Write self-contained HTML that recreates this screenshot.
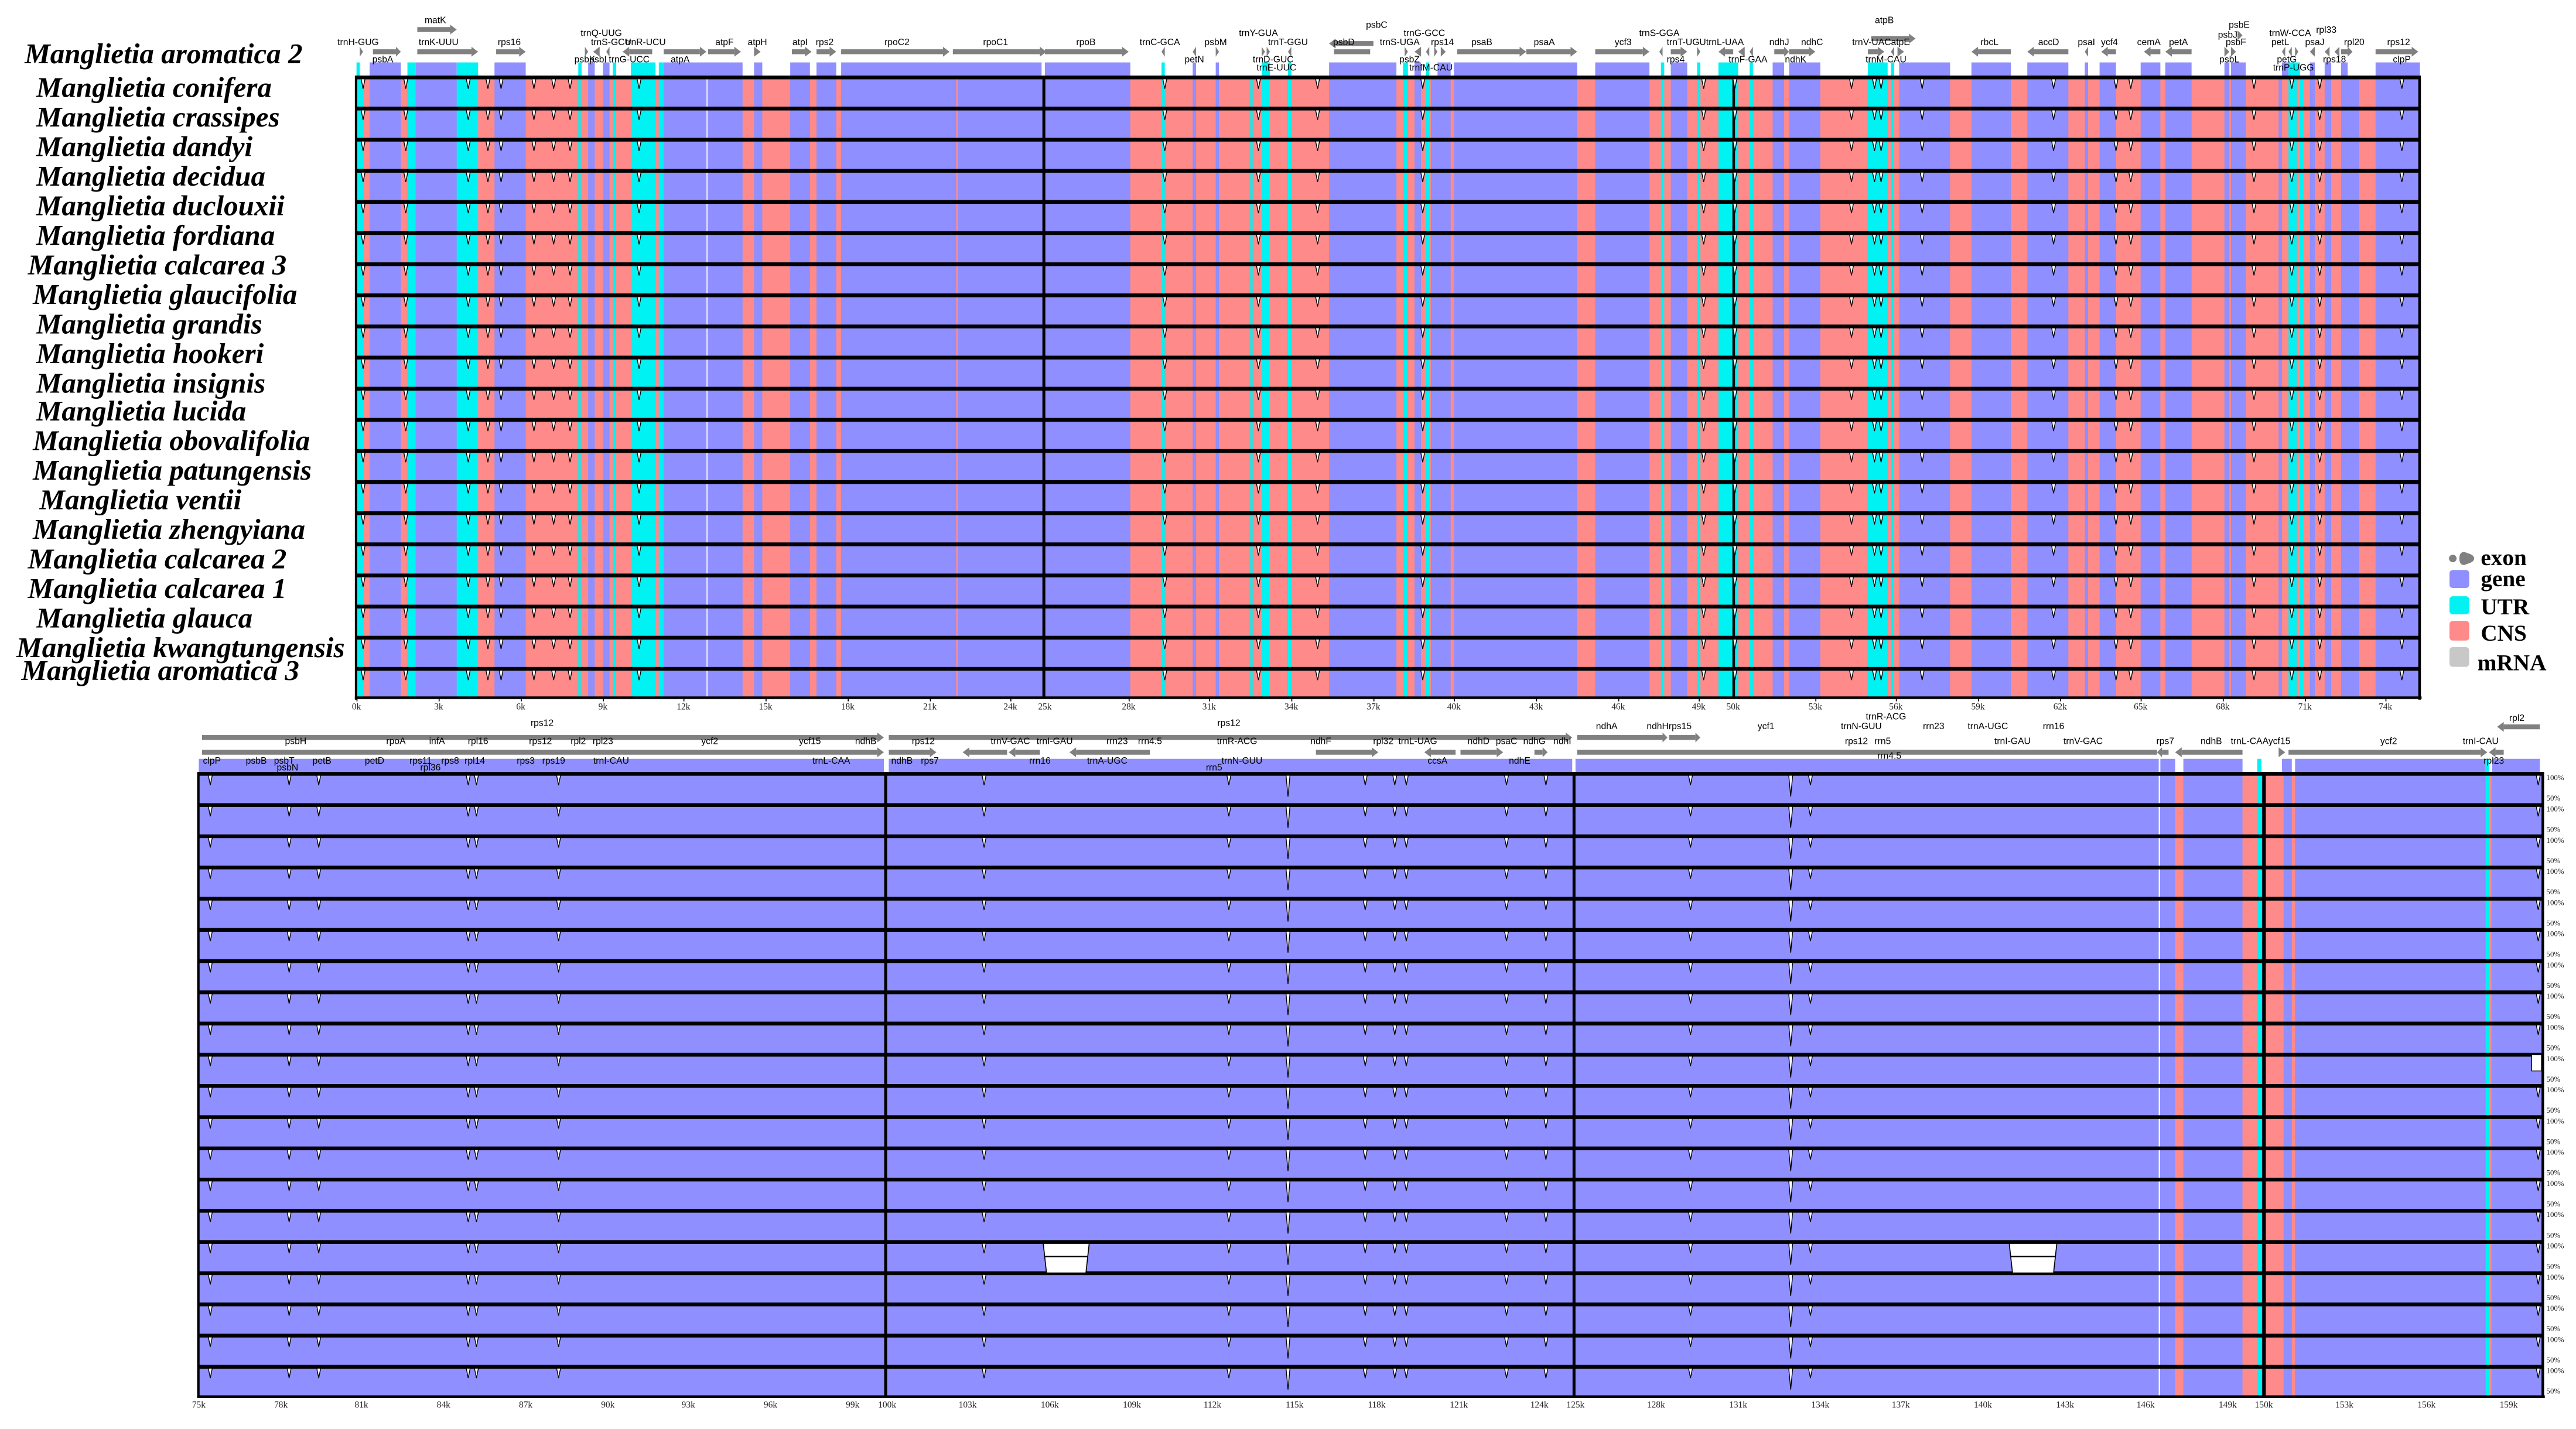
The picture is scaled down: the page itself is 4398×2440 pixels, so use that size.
<!DOCTYPE html>
<html><head><meta charset="utf-8"><style>
html,body{margin:0;padding:0;background:#fff;}
svg{display:block;}
.g{font-family:"Liberation Sans",sans-serif;font-size:5.6px;fill:#000;text-anchor:middle;}
.sp{font-family:"Liberation Serif",serif;font-style:italic;font-weight:bold;font-size:17.5px;fill:#000;}
.tk{font-family:"Liberation Serif",serif;font-size:5.5px;fill:#222;text-anchor:middle;}
.pc{font-family:"Liberation Serif",serif;font-size:4.6px;fill:#222;}
.lg{font-family:"Liberation Serif",serif;font-weight:bold;font-size:14px;fill:#000;}
</style></head><body>
<svg width="4398" height="2440" viewBox="0 0 1568 870" preserveAspectRatio="none" xmlns="http://www.w3.org/2000/svg">
<defs>
<path id="spk" d="M-1.2,0 L1.2,0 L0,6 Z" fill="#fff" stroke="#000" stroke-width="0.5"/>
<path id="spkd" d="M-1.2,0 L1.2,0 L0,13 Z" fill="#fff" stroke="#000" stroke-width="0.5"/>
<g id="trow">
<rect x="217" y="0" width="1256" height="2.3" fill="#000"/>
<use href="#spk" x="221" y="2"/><use href="#spk" x="247" y="2"/><use href="#spk" x="285" y="2"/><use href="#spk" x="297" y="2"/>
<use href="#spk" x="305" y="2"/><use href="#spk" x="325" y="2"/><use href="#spk" x="337" y="2"/><use href="#spk" x="347" y="2"/>
<use href="#spk" x="389" y="2"/><use href="#spk" x="709" y="2"/><use href="#spk" x="766" y="2"/><use href="#spk" x="802" y="2"/>
<use href="#spk" x="866" y="2"/><use href="#spk" x="1037" y="2"/><use href="#spk" x="1056" y="2"/><use href="#spk" x="1127" y="2"/>
<use href="#spk" x="1141" y="2"/><use href="#spk" x="1145" y="2"/><use href="#spk" x="1170" y="2"/><use href="#spk" x="1250" y="2"/>
<use href="#spk" x="1288" y="2"/><use href="#spk" x="1297" y="2"/><use href="#spk" x="1372" y="2"/><use href="#spk" x="1395" y="2"/>
<use href="#spk" x="1412" y="2"/><use href="#spk" x="1462" y="2"/>
</g>
<g id="brow">
<rect x="121" y="0" width="1427" height="2.3" fill="#000"/>
<use href="#spk" x="128" y="2"/><use href="#spk" x="176" y="2"/><use href="#spk" x="194" y="2"/><use href="#spk" x="285" y="2"/>
<use href="#spk" x="290" y="2"/><use href="#spk" x="340" y="2"/><use href="#spk" x="599" y="2"/><use href="#spk" x="748" y="2"/>
<use href="#spkd" x="784" y="2"/><use href="#spk" x="831" y="2"/><use href="#spk" x="849" y="2"/><use href="#spk" x="856" y="2"/>
<use href="#spk" x="917" y="2"/><use href="#spk" x="941" y="2"/><use href="#spk" x="1029" y="2"/><use href="#spkd" x="1090" y="2"/>
<use href="#spk" x="1102" y="2"/><use href="#spk" x="1545" y="2"/>
<text class="pc" x="1550" y="5">100%</text><text class="pc" x="1550" y="17.5">50%</text>
</g>
</defs>

<!-- ===== TOP PANEL ===== -->
<rect x="217" y="46" width="1256" height="379" fill="#8f8fff"/>
<g fill="#ff8a8a">
<rect x="221" y="46" width="4" height="379"/><rect x="244" y="46" width="4" height="379"/><rect x="291" y="46" width="10" height="379"/>
<rect x="320" y="46" width="38" height="379"/><rect x="362" y="46" width="5" height="379"/><rect x="371" y="46" width="13" height="379"/>
<rect x="399" y="46" width="2" height="379"/><rect x="452" y="46" width="7" height="379"/><rect x="464" y="46" width="17" height="379"/>
<rect x="493" y="46" width="4" height="379"/><rect x="509" y="46" width="3" height="379"/><rect x="582" y="46" width="1" height="379"/>
<rect x="688" y="46" width="121" height="379"/><rect x="850" y="46" width="21" height="379"/><rect x="883" y="46" width="2" height="379"/>
<rect x="960" y="46" width="11" height="379"/><rect x="1004" y="46" width="13" height="379"/><rect x="1027" y="46" width="52" height="379"/>
<rect x="1086" y="46" width="3" height="379"/><rect x="1108" y="46" width="48" height="379"/><rect x="1187" y="46" width="13" height="379"/>
<rect x="1224" y="46" width="10" height="379"/><rect x="1259" y="46" width="10" height="379"/><rect x="1271" y="46" width="7" height="379"/>
<rect x="1288" y="46" width="15" height="379"/><rect x="1315" y="46" width="3" height="379"/><rect x="1334" y="46" width="20" height="379"/>
<rect x="1357" y="46" width="1" height="379"/><rect x="1367" y="46" width="39" height="379"/><rect x="1409" y="46" width="6" height="379"/>
<rect x="1419" y="46" width="6" height="379"/><rect x="1436" y="46" width="10" height="379"/>
</g>
<g fill="#8f8fff">
<rect x="726" y="46" width="2" height="379"/><rect x="740" y="46" width="2" height="379"/><rect x="861" y="46" width="4" height="379"/>
<rect x="871" y="46" width="4" height="379"/><rect x="1387" y="46" width="2" height="379"/>
</g>
<g fill="#00f2f2">
<rect x="217" y="46" width="4" height="379"/><rect x="248" y="46" width="5" height="379"/><rect x="278" y="46" width="13" height="379"/>
<rect x="352" y="46" width="1.5" height="379"/><rect x="373" y="46" width="2" height="379"/><rect x="384" y="46" width="15" height="379"/>
<rect x="401" y="46" width="3" height="379"/><rect x="707" y="46" width="2" height="379"/><rect x="761" y="46" width="1.5" height="379"/>
<rect x="768" y="46" width="5" height="379"/><rect x="784" y="46" width="2" height="379"/><rect x="854" y="46" width="3" height="379"/>
<rect x="868" y="46" width="2" height="379"/><rect x="1011" y="46" width="2" height="379"/><rect x="1033" y="46" width="2" height="379"/>
<rect x="1046" y="46" width="12" height="379"/><rect x="1065" y="46" width="2" height="379"/><rect x="1137" y="46" width="12" height="379"/>
<rect x="1151" y="46" width="2" height="379"/><rect x="1393" y="46" width="5" height="379"/><rect x="1400" y="46" width="2" height="379"/>
</g>
<rect x="430" y="46" width="0.8" height="379" fill="#fff" opacity="0.8"/>
<rect x="634.5" y="46" width="1.8" height="379" fill="#000"/>
<rect x="1054.5" y="46" width="1.6" height="379" fill="#000"/>
<rect x="216" y="46" width="1.4" height="380" fill="#000"/>
<rect x="1472" y="46" width="1.6" height="380" fill="#000"/>
<rect x="216" y="424" width="1258" height="1.6" fill="#000"/>

<!-- gene band top -->
<g fill="#8f8fff">
<rect x="225" y="38" width="19" height="8"/><rect x="253" y="38" width="25" height="8"/><rect x="301" y="38" width="19" height="8"/>
<rect x="358" y="38" width="4" height="8"/><rect x="367" y="38" width="4" height="8"/><rect x="404" y="38" width="48" height="8"/>
<rect x="459" y="38" width="5" height="8"/><rect x="481" y="38" width="12" height="8"/><rect x="497" y="38" width="12" height="8"/>
<rect x="512" y="38" width="122" height="8"/><rect x="636" y="38" width="52" height="8"/><rect x="726" y="38" width="2" height="8"/>
<rect x="740" y="38" width="2" height="8"/><rect x="809" y="38" width="41" height="8"/><rect x="861" y="38" width="4" height="8"/>
<rect x="875" y="38" width="8" height="8"/><rect x="885" y="38" width="75" height="8"/><rect x="971" y="38" width="33" height="8"/>
<rect x="1017" y="38" width="10" height="8"/><rect x="1079" y="38" width="7" height="8"/><rect x="1089" y="38" width="19" height="8"/>
<rect x="1156" y="38" width="31" height="8"/><rect x="1200" y="38" width="24" height="8"/><rect x="1234" y="38" width="25" height="8"/>
<rect x="1269" y="38" width="2" height="8"/><rect x="1278" y="38" width="10" height="8"/><rect x="1303" y="38" width="12" height="8"/>
<rect x="1318" y="38" width="16" height="8"/><rect x="1354" y="38" width="3" height="8"/><rect x="1358" y="38" width="9" height="8"/>
<rect x="1389" y="38" width="4" height="8"/><rect x="1406" y="38" width="3" height="8"/><rect x="1415" y="38" width="4" height="8"/>
<rect x="1425" y="38" width="4" height="8"/><rect x="1446" y="38" width="27" height="8"/>
</g>
<g fill="#00f2f2">
<rect x="217" y="38" width="2" height="8"/><rect x="248" y="38" width="5" height="8"/><rect x="278" y="38" width="13" height="8"/>
<rect x="352" y="38" width="2" height="8"/><rect x="373" y="38" width="2" height="8"/><rect x="384" y="38" width="15" height="8"/>
<rect x="401" y="38" width="3" height="8"/><rect x="707" y="38" width="2" height="8"/><rect x="768" y="38" width="5" height="8"/>
<rect x="784" y="38" width="2" height="8"/><rect x="854" y="38" width="3" height="8"/><rect x="868" y="38" width="2" height="8"/>
<rect x="1011" y="38" width="2" height="8"/><rect x="1033" y="38" width="2" height="8"/><rect x="1046" y="38" width="12" height="8"/>
<rect x="1065" y="38" width="2" height="8"/><rect x="1137" y="38" width="12" height="8"/><rect x="1151" y="38" width="2" height="8"/>
<rect x="1393" y="38" width="7" height="8"/>
</g>

<!-- top rows -->
<use href="#trow" y="46"/><use href="#trow" y="64.95"/><use href="#trow" y="83.9"/><use href="#trow" y="102.85"/>
<use href="#trow" y="121.8"/><use href="#trow" y="140.75"/><use href="#trow" y="159.7"/><use href="#trow" y="178.65"/>
<use href="#trow" y="197.6"/><use href="#trow" y="216.55"/><use href="#trow" y="235.5"/><use href="#trow" y="254.45"/>
<use href="#trow" y="273.4"/><use href="#trow" y="292.35"/><use href="#trow" y="311.3"/><use href="#trow" y="330.25"/>
<use href="#trow" y="349.2"/><use href="#trow" y="368.15"/><use href="#trow" y="387.1"/><use href="#trow" y="406.05"/>

<!-- top arrows -->
<g fill="#808080">
<rect x="227" y="30" width="14" height="3"/><polygon points="241,28.5 244,31.5 241,34.5"/>
<rect x="254" y="30" width="33" height="3"/><polygon points="287,28.5 291,31.5 287,34.5"/>
<rect x="254" y="16.5" width="20" height="3"/><polygon points="274,15 278,18 274,21"/>
<rect x="302" y="30" width="14" height="3"/><polygon points="316,28.5 320,31.5 316,34.5"/>
<rect x="383" y="30" width="14" height="3"/><polygon points="383,28.5 379,31.5 383,34.5"/>
<rect x="404" y="30" width="22" height="3"/><polygon points="426,28.5 430,31.5 426,34.5"/>
<rect x="431" y="30" width="16" height="3"/><polygon points="447,28.5 451,31.5 447,34.5"/>
<polygon points="459,28.5 463,31.5 459,34.5"/>
<rect x="482" y="30" width="8" height="3"/><polygon points="490,28.5 494,31.5 490,34.5"/>
<rect x="497" y="30" width="8" height="3"/><polygon points="505,28.5 509,31.5 505,34.5"/>
<rect x="512" y="30" width="62" height="3"/><polygon points="574,28.5 578,31.5 574,34.5"/>
<rect x="580" y="30" width="53" height="3"/><polygon points="633,28.5 637,31.5 633,34.5"/>
<rect x="636" y="30" width="47" height="3"/><polygon points="683,28.5 687,31.5 683,34.5"/>
<rect x="813" y="25" width="23" height="3"/><polygon points="813,23.5 809,26.5 813,29.5"/>
<rect x="812" y="30" width="22" height="3"/>
<rect x="887" y="30" width="38" height="3"/><polygon points="925,28.5 929,31.5 925,34.5"/>
<rect x="929" y="30" width="27" height="3"/><polygon points="956,28.5 960,31.5 956,34.5"/>
<rect x="971" y="30" width="29" height="3"/><polygon points="1000,28.5 1004,31.5 1000,34.5"/>
<rect x="1017" y="30" width="6" height="3"/><polygon points="1023,28.5 1027,31.5 1023,34.5"/>
<rect x="1050" y="30" width="5" height="3"/><polygon points="1050,28.5 1046,31.5 1050,34.5"/>
<rect x="1080" y="30" width="6" height="3"/><polygon points="1086,28.5 1089,31.5 1086,34.5"/>
<rect x="1089" y="30" width="12" height="3"/><polygon points="1101,28.5 1105,31.5 1101,34.5"/>
<rect x="1137" y="30" width="6" height="3"/><polygon points="1143,28.5 1147,31.5 1143,34.5"/>
<rect x="1139" y="22" width="23" height="3"/><polygon points="1162,20.5 1166,23.5 1162,26.5"/>
<rect x="1204" y="30" width="20" height="3"/><polygon points="1204,28.5 1200,31.5 1204,34.5"/>
<rect x="1238" y="30" width="21" height="3"/><polygon points="1238,28.5 1234,31.5 1238,34.5"/>
<rect x="1283" y="30" width="5" height="3"/><polygon points="1283,28.5 1279,31.5 1283,34.5"/>
<rect x="1309" y="30" width="6" height="3"/><polygon points="1309,28.5 1305,31.5 1309,34.5"/>
<rect x="1322" y="30" width="12" height="3"/><polygon points="1322,28.5 1318,31.5 1322,34.5"/>
<rect x="1425" y="30" width="4" height="3"/>
<rect x="1446" y="30" width="22" height="3"/><polygon points="1468,28.5 1472,31.5 1468,34.5"/>
<polygon points="219,28.5 221,31.5 219,34.5"/><polygon points="356,28.5 358,31.5 356,34.5"/><polygon points="365,28.5 361,31.5 365,34.5"/>
<polygon points="371,28.5 369,31.5 371,34.5"/><polygon points="709,28.5 707,31.5 709,34.5"/><polygon points="728,28.5 726,31.5 728,34.5"/>
<polygon points="740,28.5 742,31.5 740,34.5"/><polygon points="768,28.5 770,31.5 768,34.5"/><polygon points="771,28.5 773,31.5 771,34.5"/>
<polygon points="786,28.5 784,31.5 786,34.5"/><polygon points="855,28.5 857,31.5 855,34.5"/><polygon points="865,28.5 861,31.5 865,34.5"/>
<polygon points="870,28.5 868,31.5 870,34.5"/><polygon points="873,28.5 875,31.5 873,34.5"/><polygon points="877,28.5 880,31.5 877,34.5"/>
<polygon points="1012,28.5 1010,31.5 1012,34.5"/><polygon points="1033,28.5 1035,31.5 1033,34.5"/><polygon points="1062,28.5 1058,31.5 1062,34.5"/>
<polygon points="1067,28.5 1065,31.5 1067,34.5"/><polygon points="1153,28.5 1151,31.5 1153,34.5"/><polygon points="1155,28.5 1159,31.5 1155,34.5"/>
<polygon points="1271,28.5 1269,31.5 1271,34.5"/><polygon points="1354,28.5 1357,31.5 1354,34.5"/><polygon points="1358,28.5 1361,31.5 1358,34.5"/>
<polygon points="1362,18.5 1365,21.5 1362,24.5"/><polygon points="1391,28.5 1389,31.5 1391,34.5"/><polygon points="1395,28.5 1393,31.5 1395,34.5"/>
<polygon points="1397,28.5 1399,31.5 1397,34.5"/><polygon points="1409,28.5 1406,31.5 1409,34.5"/><polygon points="1418,28.5 1415,31.5 1418,34.5"/>
<polygon points="1424,28.5 1421,31.5 1424,34.5"/><polygon points="1429,28.5 1432,31.5 1429,34.5"/>
</g>

<!-- top gene labels -->
<g class="g">
<text x="218" y="27.5">trnH-GUG</text><text x="267" y="27.5">trnK-UUU</text><text x="310" y="27.5">rps16</text>
<text x="372" y="27.5">trnS-GCU</text><text x="393" y="27.5">trnR-UCU</text><text x="441" y="27.5">atpF</text>
<text x="461" y="27.5">atpH</text><text x="487" y="27.5">atpI</text><text x="502" y="27.5">rps2</text>
<text x="546" y="27.5">rpoC2</text><text x="606" y="27.5">rpoC1</text><text x="661" y="27.5">rpoB</text>
<text x="706" y="27.5">trnC-GCA</text><text x="740" y="27.5">psbM</text><text x="784" y="27.5">trnT-GGU</text>
<text x="818" y="27.5">psbD</text><text x="852" y="27.5">trnS-UGA</text><text x="878" y="27.5">rps14</text>
<text x="902" y="27.5">psaB</text><text x="940" y="27.5">psaA</text><text x="988" y="27.5">ycf3</text>
<text x="1038" y="27.5">trnT-UGUtrnL-UAA</text><text x="1083" y="27.5">ndhJ</text><text x="1103" y="27.5">ndhC</text>
<text x="1145" y="27.5">trnV-UACatpE</text><text x="1211" y="27.5">rbcL</text><text x="1247" y="27.5">accD</text>
<text x="1270" y="27.5">psaI</text><text x="1284" y="27.5">ycf4</text><text x="1308" y="27.5">cemA</text>
<text x="1326" y="27.5">petA</text><text x="1361" y="27.5">psbF</text><text x="1388" y="27.5">petL</text>
<text x="1409" y="27.5">psaJ</text><text x="1433" y="27.5">rpl20</text><text x="1460" y="27.5">rps12</text>
<text x="265" y="14">matK</text><text x="366" y="22">trnQ-UUG</text><text x="838" y="17">psbC</text>
<text x="867" y="22">trnG-GCC</text><text x="766" y="22">trnY-GUA</text><text x="1010" y="22">trnS-GGA</text>
<text x="1147" y="14">atpB</text><text x="1363" y="17">psbE</text><text x="1356" y="23">psbJ</text>
<text x="1394" y="22">trnW-CCA</text><text x="1416" y="20">rpl33</text>
<text x="233" y="38">psbA</text><text x="356" y="38">psbK</text><text x="364" y="38">psbI</text>
<text x="383" y="38">trnG-UCC</text><text x="414" y="38">atpA</text><text x="727" y="38">petN</text>
<text x="775" y="38">trnD-GUC</text><text x="858" y="38">psbZ</text><text x="1020" y="38">rps4</text>
<text x="1064" y="38">trnF-GAA</text><text x="1093" y="38">ndhK</text><text x="1148" y="38">trnM-CAU</text>
<text x="1357" y="38">psbL</text><text x="1392" y="38">petG</text><text x="1421" y="38">rps18</text>
<text x="1462" y="38">clpP</text><text x="777" y="43">trnE-UUC</text><text x="871" y="43">trnfM-CAU</text>
<text x="1396" y="43">trnP-UGG</text>
</g>

<!-- species names -->
<g class="sp">
<text x="15" y="38.5">Manglietia aromatica 2</text>
<text x="22" y="59">Manglietia conifera</text>
<text x="22" y="77">Manglietia crassipes</text>
<text x="22" y="95">Manglietia dandyi</text>
<text x="22" y="113">Manglietia decidua</text>
<text x="22" y="131">Manglietia duclouxii</text>
<text x="22" y="149">Manglietia fordiana</text>
<text x="17" y="167">Manglietia calcarea 3</text>
<text x="20" y="185">Manglietia glaucifolia</text>
<text x="22" y="203">Manglietia grandis</text>
<text x="22" y="221">Manglietia hookeri</text>
<text x="22" y="239">Manglietia insignis</text>
<text x="22" y="256">Manglietia lucida</text>
<text x="20" y="274">Manglietia obovalifolia</text>
<text x="20" y="292">Manglietia patungensis</text>
<text x="24" y="310">Manglietia ventii</text>
<text x="20" y="328">Manglietia zhengyiana</text>
<text x="17" y="346">Manglietia calcarea 2</text>
<text x="17" y="364">Manglietia calcarea 1</text>
<text x="22" y="382">Manglietia glauca</text>
<text x="10" y="400">Manglietia kwangtungensis</text>
<text x="13" y="414">Manglietia aromatica 3</text>
</g>

<!-- top ticks -->
<g fill="#000">
<rect x="217" y="425" width="0.6" height="2"/><rect x="267" y="425" width="0.6" height="2"/><rect x="317" y="425" width="0.6" height="2"/>
<rect x="367" y="425" width="0.6" height="2"/><rect x="416" y="425" width="0.6" height="2"/><rect x="466" y="425" width="0.6" height="2"/>
<rect x="516" y="425" width="0.6" height="2"/><rect x="566" y="425" width="0.6" height="2"/><rect x="615" y="425" width="0.6" height="2"/>
<rect x="687" y="425" width="0.6" height="2"/><rect x="736" y="425" width="0.6" height="2"/><rect x="786" y="425" width="0.6" height="2"/>
<rect x="836" y="425" width="0.6" height="2"/><rect x="885" y="425" width="0.6" height="2"/><rect x="935" y="425" width="0.6" height="2"/>
<rect x="985" y="425" width="0.6" height="2"/><rect x="1034" y="425" width="0.6" height="2"/><rect x="1105" y="425" width="0.6" height="2"/>
<rect x="1154" y="425" width="0.6" height="2"/><rect x="1204" y="425" width="0.6" height="2"/><rect x="1254" y="425" width="0.6" height="2"/>
<rect x="1303" y="425" width="0.6" height="2"/><rect x="1353" y="425" width="0.6" height="2"/><rect x="1403" y="425" width="0.6" height="2"/>
<rect x="1452" y="425" width="0.6" height="2"/>
</g>
<g class="tk">
<text x="217" y="432">0k</text><text x="267" y="432">3k</text><text x="317" y="432">6k</text><text x="367" y="432">9k</text>
<text x="416" y="432">12k</text><text x="466" y="432">15k</text><text x="516" y="432">18k</text><text x="566" y="432">21k</text>
<text x="615" y="432">24k</text><text x="636" y="432">25k</text><text x="687" y="432">28k</text><text x="736" y="432">31k</text>
<text x="786" y="432">34k</text><text x="836" y="432">37k</text><text x="885" y="432">40k</text><text x="935" y="432">43k</text>
<text x="985" y="432">46k</text><text x="1034" y="432">49k</text><text x="1055" y="432">50k</text><text x="1105" y="432">53k</text>
<text x="1154" y="432">56k</text><text x="1204" y="432">59k</text><text x="1254" y="432">62k</text><text x="1303" y="432">65k</text>
<text x="1353" y="432">68k</text><text x="1403" y="432">71k</text><text x="1452" y="432">74k</text>
</g>

<!-- legend -->
<circle cx="1493" cy="340" r="2.3" fill="#808080"/>
<path d="M1497,340 Q1497,336 1500,336 L1504,337.5 Q1506,338.5 1506,340 Q1506,341.5 1504,342.5 L1500,344 Q1497,344 1497,340 Z" fill="#808080"/>
<rect x="1491" y="347" width="12" height="11" rx="2" fill="#8f8fff"/>
<rect x="1491" y="363" width="12" height="11" rx="2" fill="#00f2f2"/>
<rect x="1491" y="378" width="12" height="12" rx="2" fill="#ff8a8a"/>
<rect x="1491" y="394" width="12" height="12" rx="2" fill="#c8c8c8"/>
<text class="lg" x="1510" y="344">exon</text>
<text class="lg" x="1510" y="357">gene</text>
<text class="lg" x="1510" y="374">UTR</text>
<text class="lg" x="1510" y="390">CNS</text>
<text class="lg" x="1508" y="408">mRNA</text>

<!-- ===== BOTTOM PANEL ===== -->
<rect x="121" y="470" width="1427" height="380" fill="#8f8fff"/>
<g fill="#ff8a8a">
<rect x="1324" y="470" width="5" height="380"/><rect x="1365" y="470" width="9" height="380"/>
<rect x="1379" y="470" width="11" height="380"/><rect x="1395" y="470" width="2" height="380"/><rect x="1515" y="470" width="1.5" height="380"/>
</g>
<g fill="#00f2f2">
<rect x="1374" y="470" width="2.5" height="380"/><rect x="1513" y="470" width="2.2" height="380"/>
</g>
<rect x="1314" y="470" width="0.8" height="380" fill="#fff"/>
<rect x="120" y="470" width="1.5" height="381" fill="#000"/>
<rect x="538.2" y="470" width="1.8" height="381" fill="#000"/>
<rect x="957.2" y="470" width="1.8" height="381" fill="#000"/>
<rect x="1377" y="470" width="2.2" height="381" fill="#000"/>
<rect x="1547" y="470" width="1.6" height="381" fill="#000"/>
<rect x="120" y="849.5" width="1429" height="1.6" fill="#000"/>

<!-- bottom gene band -->
<g fill="#8f8fff">
<rect x="121" y="462" width="417" height="8"/><rect x="541" y="462" width="416" height="8"/>
<rect x="959" y="462" width="355" height="8"/><rect x="1315" y="462" width="9" height="8"/><rect x="1329" y="462" width="36" height="8"/>
<rect x="1389" y="462" width="6" height="8"/><rect x="1397" y="462" width="116" height="8"/><rect x="1517" y="462" width="29" height="8"/>
</g>
<g fill="#00f2f2"><rect x="1374" y="462" width="2.5" height="8"/><rect x="1513" y="462" width="2" height="8"/></g>

<!-- bottom rows -->
<use href="#brow" y="470"/><use href="#brow" y="489"/><use href="#brow" y="508"/><use href="#brow" y="527"/>
<use href="#brow" y="546"/><use href="#brow" y="565"/><use href="#brow" y="584"/><use href="#brow" y="603"/>
<use href="#brow" y="622"/><use href="#brow" y="641"/><use href="#brow" y="660"/><use href="#brow" y="679"/>
<use href="#brow" y="698"/><use href="#brow" y="717"/><use href="#brow" y="736"/><use href="#brow" y="755"/>
<use href="#brow" y="774"/><use href="#brow" y="793"/><use href="#brow" y="812"/><use href="#brow" y="831"/>
<rect x="1541" y="642" width="6" height="10" fill="#fff" stroke="#000" stroke-width="0.5"/>
<path d="M635,757 L663,757 L661,775 L637,775 Z" fill="#fff" stroke="#000" stroke-width="0.6"/>
<line x1="636" y1="765" x2="662" y2="765" stroke="#000" stroke-width="0.8"/>
<path d="M1223,757 L1252,757 L1250,775 L1225,775 Z" fill="#fff" stroke="#000" stroke-width="0.6"/>
<line x1="1224" y1="765" x2="1251" y2="765" stroke="#000" stroke-width="0.8"/>

<!-- bottom arrows -->
<g fill="#808080">
<rect x="123" y="447.5" width="411" height="3"/><polygon points="534,446 538,449 534,452"/>
<rect x="541" y="447.5" width="412" height="3"/><polygon points="953,446 957,449 953,452"/>
<rect x="960" y="447.5" width="52" height="3"/><polygon points="1012,446 1015,449 1012,452"/>
<rect x="1016" y="447.5" width="16" height="3"/><polygon points="1032,446 1035,449 1032,452"/>
<rect x="123" y="456.5" width="411" height="3"/><polygon points="534,455 538,458 534,461"/>
<rect x="541" y="456.5" width="25" height="3"/><polygon points="566,455 570,458 566,461"/>
<rect x="590" y="456.5" width="23" height="3"/><polygon points="590,455 586,458 590,461"/>
<rect x="618" y="456.5" width="15" height="3"/><polygon points="618,455 614,458 618,461"/>
<rect x="655" y="456.5" width="45" height="3"/><polygon points="655,455 651,458 655,461"/>
<rect x="801" y="456.5" width="34" height="3"/><polygon points="835,455 839,458 835,461"/>
<rect x="871" y="456.5" width="15" height="3"/><polygon points="871,455 867,458 871,461"/>
<rect x="889" y="456.5" width="22" height="3"/><polygon points="911,455 915,458 911,461"/>
<rect x="934" y="456.5" width="5" height="3"/><polygon points="939,455 942,458 939,461"/>
<rect x="960" y="456.5" width="353" height="3"/>
<rect x="1328" y="456.5" width="37" height="3"/><polygon points="1328,455 1324,458 1328,461"/>
<rect x="1393" y="456.5" width="117" height="3"/><polygon points="1510,455 1514,458 1510,461"/>
<polygon points="1387,455 1391,458 1387,461"/>
<rect x="1524" y="441" width="22" height="3"/><polygon points="1524,439.5 1520,442.5 1524,445.5"/>
<rect x="1519" y="456.5" width="5" height="3"/><polygon points="1519,455 1515,458 1519,461"/>
<rect x="1316" y="456.5" width="4" height="3"/><polygon points="1316,455 1313,458 1316,461"/>
</g>

<!-- bottom gene labels -->
<g class="g">
<text x="330" y="442">rps12</text><text x="748" y="442">rps12</text><text x="1148" y="438">trnR-ACG</text>
<text x="1133" y="444">trnN-GUU</text><text x="978" y="444">ndhA</text><text x="1016" y="444">ndhHrps15</text>
<text x="1075" y="444">ycf1</text><text x="1177" y="444">rrn23</text><text x="1210" y="444">trnA-UGC</text>
<text x="1250" y="444">rrn16</text><text x="1532" y="439">rpl2</text>
<text x="180" y="453">psbH</text><text x="241" y="453">rpoA</text><text x="266" y="453">infA</text>
<text x="291" y="453">rpl16</text><text x="329" y="453">rps12</text><text x="352" y="453">rpl2</text>
<text x="367" y="453">rpl23</text><text x="432" y="453">ycf2</text><text x="493" y="453">ycf15</text>
<text x="527" y="453">ndhB</text><text x="562" y="453">rps12</text><text x="615" y="453">trnV-GAC</text>
<text x="642" y="453">trnI-GAU</text><text x="680" y="453">rrn23</text><text x="700" y="453">rrn4.5</text>
<text x="753" y="453">trnR-ACG</text><text x="804" y="453">ndhF</text><text x="842" y="453">rpl32</text>
<text x="863" y="453">trnL-UAG</text><text x="900" y="453">ndhD</text><text x="917" y="453">psaC</text>
<text x="934" y="453">ndhG</text><text x="951" y="453">ndhI</text><text x="1130" y="453">rps12</text>
<text x="1146" y="453">rrn5</text><text x="1225" y="453">trnI-GAU</text><text x="1268" y="453">trnV-GAC</text>
<text x="1318" y="453">rps7</text><text x="1346" y="453">ndhB</text><text x="1376" y="453">trnL-CAAycf15</text>
<text x="1454" y="453">ycf2</text><text x="1510" y="453">trnI-CAU</text>
<text x="129" y="465">clpP</text><text x="156" y="465">psbB</text><text x="173" y="465">psbT</text>
<text x="196" y="465">petB</text><text x="228" y="465">petD</text><text x="256" y="465">rps11</text>
<text x="274" y="465">rps8</text><text x="289" y="465">rpl14</text><text x="320" y="465">rps3</text>
<text x="337" y="465">rps19</text><text x="372" y="465">trnI-CAU</text><text x="506" y="465">trnL-CAA</text>
<text x="549" y="465">ndhB</text><text x="566" y="465">rps7</text><text x="633" y="465">rrn16</text>
<text x="674" y="465">trnA-UGC</text><text x="756" y="465">trnN-GUU</text><text x="875" y="465">ccsA</text>
<text x="925" y="465">ndhE</text><text x="1150" y="462">rrn4.5</text><text x="1518" y="465">rpl23</text>
<text x="175" y="469">psbN</text><text x="262" y="469">rpl36</text><text x="739" y="469">rrn5</text>
</g>

<!-- bottom ticks -->
<g class="tk">
<text x="121" y="857">75k</text><text x="171" y="857">78k</text><text x="220" y="857">81k</text><text x="270" y="857">84k</text>
<text x="320" y="857">87k</text><text x="370" y="857">90k</text><text x="419" y="857">93k</text><text x="469" y="857">96k</text>
<text x="519" y="857">99k</text><text x="540" y="857">100k</text><text x="589" y="857">103k</text><text x="639" y="857">106k</text>
<text x="689" y="857">109k</text><text x="738" y="857">112k</text><text x="788" y="857">115k</text><text x="838" y="857">118k</text>
<text x="888" y="857">121k</text><text x="937" y="857">124k</text><text x="959" y="857">125k</text><text x="1008" y="857">128k</text>
<text x="1058" y="857">131k</text><text x="1108" y="857">134k</text><text x="1157" y="857">137k</text><text x="1207" y="857">140k</text>
<text x="1257" y="857">143k</text><text x="1306" y="857">146k</text><text x="1356" y="857">149k</text><text x="1378" y="857">150k</text>
<text x="1427" y="857">153k</text><text x="1477" y="857">156k</text><text x="1527" y="857">159k</text>
</g>
</svg>
</body></html>
